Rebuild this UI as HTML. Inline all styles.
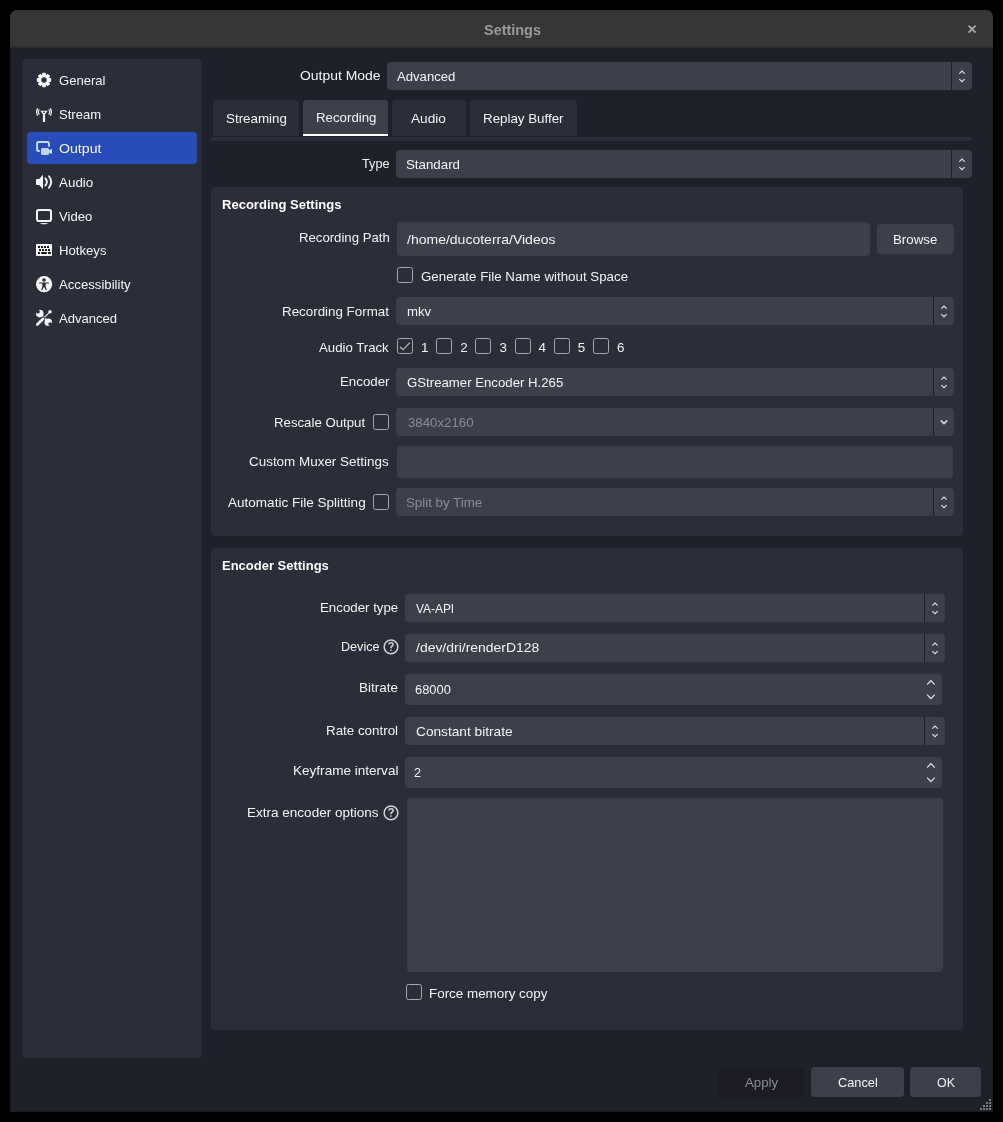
<!DOCTYPE html>
<html><head><meta charset="utf-8"><style>
html,body{margin:0;padding:0;background:#000;width:1003px;height:1122px;overflow:hidden;}
body{position:relative;font-family:"Liberation Sans",sans-serif;}
#root{position:absolute;left:0;top:0;width:1003px;height:1122px;will-change:transform;}
</style></head><body>
<div id="root">
<div style="position:absolute;left:10px;top:10px;width:983px;height:1102px;background:#1b1b1b;border-radius:7px 7px 0 0;"></div>
<div style="position:absolute;left:11px;top:48px;width:981px;height:1063px;background:#1f212a;border-radius:0;"></div>
<div style="position:absolute;left:10px;top:10px;width:983px;height:36px;background:#363636;border-radius:7px 7px 0 0;"></div>
<div style="position:absolute;left:10px;top:46px;width:983px;height:2px;background:#2b2b2b;border-radius:0;"></div>
<div style="position:absolute;left:484.40px;top:22.15px;font-size:14.2px;line-height:16.32px;color:#9b9b9b;font-weight:bold;white-space:nowrap;transform:scaleX(1.0175);transform-origin:0 0;">Settings</div>
<svg style="position:absolute;left:966px;top:23px;" width="12" height="12" viewBox="0 0 12 12"><path d="M2.6 2.6L9.6 9.6M9.6 2.6L2.6 9.6" stroke="#a5a5a5" stroke-width="2" stroke-linecap="butt"/></svg>
<div style="position:absolute;left:22px;top:59px;width:180px;height:999px;background:#2b2d38;border-radius:4px;"></div>
<div style="position:absolute;left:27px;top:132px;width:170px;height:32px;background:#284cb8;border-radius:4px;"></div>
<div style="position:absolute;left:58.50px;top:72.85px;font-size:13.2px;line-height:15.17px;color:#f6f6f6;font-weight:normal;white-space:nowrap;transform:scaleX(0.9902);transform-origin:0 0;">General</div>
<div style="position:absolute;left:58.50px;top:106.85px;font-size:13.2px;line-height:15.17px;color:#f6f6f6;font-weight:normal;white-space:nowrap;transform:scaleX(0.9897);transform-origin:0 0;">Stream</div>
<div style="position:absolute;left:58.50px;top:140.85px;font-size:13.2px;line-height:15.17px;color:#f6f6f6;font-weight:normal;white-space:nowrap;transform:scaleX(1.0723);transform-origin:0 0;">Output</div>
<div style="position:absolute;left:58.50px;top:174.85px;font-size:13.2px;line-height:15.17px;color:#f6f6f6;font-weight:normal;white-space:nowrap;transform:scaleX(1.0160);transform-origin:0 0;">Audio</div>
<div style="position:absolute;left:58.50px;top:208.85px;font-size:13.2px;line-height:15.17px;color:#f6f6f6;font-weight:normal;white-space:nowrap;transform:scaleX(0.9932);transform-origin:0 0;">Video</div>
<div style="position:absolute;left:58.50px;top:242.85px;font-size:13.2px;line-height:15.17px;color:#f6f6f6;font-weight:normal;white-space:nowrap;transform:scaleX(0.9961);transform-origin:0 0;">Hotkeys</div>
<div style="position:absolute;left:58.50px;top:276.85px;font-size:13.2px;line-height:15.17px;color:#f6f6f6;font-weight:normal;white-space:nowrap;transform:scaleX(0.9976);transform-origin:0 0;">Accessibility</div>
<div style="position:absolute;left:58.50px;top:310.85px;font-size:13.2px;line-height:15.17px;color:#f6f6f6;font-weight:normal;white-space:nowrap;transform:scaleX(0.9880);transform-origin:0 0;">Advanced</div>
<svg style="position:absolute;left:36px;top:72px;" width="16" height="16" viewBox="0 0 16 16"><g transform="translate(8,8)"><rect x="-1.9" y="-7.2" width="3.8" height="4" rx="0.8" fill="#f4f4f4" transform="rotate(0)"/><rect x="-1.9" y="-7.2" width="3.8" height="4" rx="0.8" fill="#f4f4f4" transform="rotate(45)"/><rect x="-1.9" y="-7.2" width="3.8" height="4" rx="0.8" fill="#f4f4f4" transform="rotate(90)"/><rect x="-1.9" y="-7.2" width="3.8" height="4" rx="0.8" fill="#f4f4f4" transform="rotate(135)"/><rect x="-1.9" y="-7.2" width="3.8" height="4" rx="0.8" fill="#f4f4f4" transform="rotate(180)"/><rect x="-1.9" y="-7.2" width="3.8" height="4" rx="0.8" fill="#f4f4f4" transform="rotate(225)"/><rect x="-1.9" y="-7.2" width="3.8" height="4" rx="0.8" fill="#f4f4f4" transform="rotate(270)"/><rect x="-1.9" y="-7.2" width="3.8" height="4" rx="0.8" fill="#f4f4f4" transform="rotate(315)"/><circle r="5.3" fill="#f4f4f4"/><circle r="2.7" fill="#2b2d38"/></g></svg>
<svg style="position:absolute;left:36px;top:104px;" width="16" height="20" viewBox="0 0 16 20"><path d="M4.3 6.8 H11.7 L8 11.8 Z" fill="#f4f4f4"/>
<ellipse cx="8" cy="8.2" rx="1" ry="0.7" fill="#2b2d38"/>
<rect x="6.9" y="10.8" width="2.2" height="7.2" fill="#f4f4f4"/>
<path d="M1.9 4.3 Q-0.7 8 1.9 11.7" fill="none" stroke="#f4f4f4" stroke-width="1.3"/>
<path d="M3.5 5.6 Q0.9 8 3.5 10.4" fill="none" stroke="#f4f4f4" stroke-width="1.2"/>
<path d="M14.1 4.3 Q16.7 8 14.1 11.7" fill="none" stroke="#f4f4f4" stroke-width="1.3"/>
<path d="M12.5 5.6 Q15.1 8 12.5 10.4" fill="none" stroke="#f4f4f4" stroke-width="1.2"/></svg>
<svg style="position:absolute;left:34px;top:137px;" width="20" height="20" viewBox="0 0 20 20"><path d="M14.9 9.65 V6.7 Q14.9 5.06 13.3 5.06 H4.7 Q3.08 5.06 3.08 6.7 V12.3 Q3.08 13.9 4.7 13.9 H5.8" fill="none" stroke="#c6dcf2" stroke-width="2"/>
<rect x="7" y="11" width="8.1" height="7" rx="1.6" fill="#bfd5ee"/>
<path d="M14.5 13.6 L18 11.8 V17.1 L14.5 15.4 Z" fill="#c6dcf2"/></svg>
<svg style="position:absolute;left:34px;top:171px;" width="22" height="22" viewBox="0 0 22 22"><path d="M2 9.3 Q2 8.1 3.2 8.1 H5.2 L9 3.7 V18.2 L5.2 14 H3.2 Q2 14 2 12.8Z" fill="#f4f4f4"/>
<path d="M11.3 7.4 Q14.5 11 11.3 14.6" fill="none" stroke="#f4f4f4" stroke-width="1.9" stroke-linecap="round"/>
<path d="M15 5.3 Q19.3 11 15 16.7" fill="none" stroke="#f4f4f4" stroke-width="1.9" stroke-linecap="round"/></svg>
<svg style="position:absolute;left:36px;top:209px;" width="16" height="16" viewBox="0 0 16 16"><rect x="1" y="1" width="14" height="11" rx="1.8" fill="none" stroke="#f4f4f4" stroke-width="2"/>
<ellipse cx="8" cy="14.6" rx="4" ry="0.7" fill="#f4f4f4"/></svg>
<svg style="position:absolute;left:36px;top:244px;" width="16" height="12" viewBox="0 0 16 12"><rect x="0" y="0" width="16" height="12" rx="0.7" fill="#f4f4f4"/><rect x="2" y="2" width="2" height="2" rx="0.3" fill="#15161c"/><rect x="5" y="2" width="2" height="2" rx="0.3" fill="#15161c"/><rect x="8" y="2" width="2" height="2" rx="0.3" fill="#15161c"/><rect x="11" y="2" width="2" height="2" rx="0.3" fill="#15161c"/><rect x="3" y="5" width="2" height="2" rx="0.3" fill="#15161c"/><rect x="6" y="5" width="2" height="2" rx="0.3" fill="#15161c"/><rect x="9" y="5" width="2" height="2" rx="0.3" fill="#15161c"/><rect x="12" y="5" width="2" height="2" rx="0.3" fill="#15161c"/><rect x="2" y="8" width="2" height="2" rx="0.3" fill="#15161c"/><rect x="5.2" y="8" width="5.6" height="2" rx="0.3" fill="#15161c"/><rect x="12.1" y="8" width="2.8" height="2" rx="0.3" fill="#15161c"/></svg>
<svg style="position:absolute;left:36px;top:275.6px;" width="17" height="17" viewBox="0 0 17 17"><circle cx="8.1" cy="8.2" r="8.1" fill="#f4f4f4"/>
<circle cx="8" cy="4" r="1.8" fill="#2b2d38"/>
<path d="M3 6.4 H13 V7.4 L9.7 7.6 L9.6 10.5 L10.9 14.1 L9.9 14.3 L8 10.8 L6.1 14.3 L5.1 14.1 L6.4 10.5 L6.3 7.6 L3 7.4Z" fill="#2b2d38"/></svg>
<svg style="position:absolute;left:34px;top:306px;" width="22" height="24" viewBox="0 0 22 24"><path d="M5.8 7.6 L14.3 16.2" stroke="#f4f4f4" stroke-width="2.3"/>
<circle cx="5.8" cy="7.6" r="3.8" fill="#f4f4f4"/><circle cx="3.9" cy="5.7" r="1.9" fill="#2b2d38"/>
<circle cx="14.3" cy="16.2" r="3.8" fill="#f4f4f4"/><circle cx="16.2" cy="18.1" r="1.9" fill="#2b2d38"/>
<path d="M8.6 13.4 L15.4 6.4" stroke="#2b2d38" stroke-width="2.4"/>
<path d="M8.6 13.4 L15.4 6.4" stroke="#f4f4f4" stroke-width="1.1"/>
<path d="M3.3 18.6 L9 12.9" stroke="#2b2d38" stroke-width="4.4" stroke-linecap="round"/>
<path d="M3.3 18.6 L9 12.9" stroke="#f4f4f4" stroke-width="2.8" stroke-linecap="round"/>
<circle cx="16" cy="5.8" r="1.7" fill="#f4f4f4"/></svg>
<div style="position:absolute;left:300.00px;top:68.27px;font-size:13.4px;line-height:15.40px;color:#f4f4f4;font-weight:normal;white-space:nowrap;transform:scaleX(1.0402);transform-origin:0 0;">Output Mode</div>
<div style="position:absolute;left:387px;top:62px;width:585px;height:28px;background:#3c404b;border-radius:4px;"></div>
<div style="position:absolute;left:951px;top:62px;width:1px;height:28px;background:#1c1e26;border-radius:0;"></div>
<svg style="position:absolute;left:952px;top:62px;" width="20" height="28" viewBox="0 0 20 28"><path d="M7.3 11.700000000000001 L10 9.1 L12.7 11.700000000000001" fill="none" stroke="#e4e4e4" stroke-width="1.1"/><path d="M7.3 17.099999999999998 L10 19.7 L12.7 17.099999999999998" fill="none" stroke="#e4e4e4" stroke-width="1.1"/></svg>
<div style="position:absolute;left:397.00px;top:68.87px;font-size:13.4px;line-height:15.40px;color:#f4f4f4;font-weight:normal;white-space:nowrap;transform:scaleX(0.9799);transform-origin:0 0;">Advanced</div>
<div style="position:absolute;left:211px;top:137px;width:760px;height:4px;background:#2b2d38;border-radius:0;"></div>
<div style="position:absolute;left:213px;top:100px;width:86px;height:36px;background:#2b2d38;border-radius:4px 4px 0 0;"></div>
<div style="position:absolute;left:225.50px;top:111.37px;font-size:13.4px;line-height:15.40px;color:#f4f4f4;font-weight:normal;white-space:nowrap;transform:scaleX(0.9988);transform-origin:0 0;">Streaming</div>
<div style="position:absolute;left:303px;top:100px;width:85px;height:36px;background:#3c404b;border-radius:4px 4px 0 0;"></div>
<div style="position:absolute;left:303px;top:134px;width:85px;height:2px;background:#ffffff;border-radius:0;"></div>
<div style="position:absolute;left:315.50px;top:110.27px;font-size:13.4px;line-height:15.40px;color:#f4f4f4;font-weight:normal;white-space:nowrap;transform:scaleX(0.9907);transform-origin:0 0;">Recording</div>
<div style="position:absolute;left:392px;top:100px;width:74px;height:36px;background:#2b2d38;border-radius:4px 4px 0 0;"></div>
<div style="position:absolute;left:411.30px;top:110.77px;font-size:13.4px;line-height:15.40px;color:#f4f4f4;font-weight:normal;white-space:nowrap;transform:scaleX(1.0184);transform-origin:0 0;">Audio</div>
<div style="position:absolute;left:470px;top:100px;width:107px;height:36px;background:#2b2d38;border-radius:4px 4px 0 0;"></div>
<div style="position:absolute;left:483.30px;top:110.77px;font-size:13.4px;line-height:15.40px;color:#f4f4f4;font-weight:normal;white-space:nowrap;transform:scaleX(0.9958);transform-origin:0 0;">Replay Buffer</div>
<div style="position:absolute;left:362.00px;top:156.47px;font-size:13.4px;line-height:15.40px;color:#f4f4f4;font-weight:normal;white-space:nowrap;transform:scaleX(0.9503);transform-origin:0 0;">Type</div>
<div style="position:absolute;left:396px;top:150px;width:576px;height:28px;background:#3c404b;border-radius:4px;"></div>
<div style="position:absolute;left:951px;top:150px;width:1px;height:28px;background:#1c1e26;border-radius:0;"></div>
<svg style="position:absolute;left:952px;top:150px;" width="20" height="28" viewBox="0 0 20 28"><path d="M7.3 11.700000000000001 L10 9.1 L12.7 11.700000000000001" fill="none" stroke="#e4e4e4" stroke-width="1.1"/><path d="M7.3 17.099999999999998 L10 19.7 L12.7 17.099999999999998" fill="none" stroke="#e4e4e4" stroke-width="1.1"/></svg>
<div style="position:absolute;left:406.40px;top:156.87px;font-size:13.4px;line-height:15.40px;color:#f4f4f4;font-weight:normal;white-space:nowrap;transform:scaleX(0.9932);transform-origin:0 0;">Standard</div>
<div style="position:absolute;left:211px;top:187px;width:752px;height:349px;background:#2b2d38;border-radius:4px;"></div>
<div style="position:absolute;left:221.50px;top:197.14px;font-size:13.1px;line-height:15.05px;color:#ffffff;font-weight:bold;white-space:nowrap;transform:scaleX(0.9951);transform-origin:0 0;">Recording Settings</div>
<div style="position:absolute;left:298.50px;top:230.07px;font-size:13.4px;line-height:15.40px;color:#f4f4f4;font-weight:normal;white-space:nowrap;transform:scaleX(0.9831);transform-origin:0 0;">Recording Path</div>
<div style="position:absolute;left:397px;top:222px;width:473px;height:34px;background:#3c404b;border-radius:4px;"></div>
<div style="position:absolute;left:407.40px;top:231.87px;font-size:13.4px;line-height:15.40px;color:#f4f4f4;font-weight:normal;white-space:nowrap;transform:scaleX(1.0462);transform-origin:0 0;">/home/ducoterra/Videos</div>
<div style="position:absolute;left:877px;top:224px;width:77px;height:30px;background:#3c404b;border-radius:4px;"></div>
<div style="position:absolute;left:893.00px;top:232.17px;font-size:13.4px;line-height:15.40px;color:#f4f4f4;font-weight:normal;white-space:nowrap;transform:scaleX(0.9913);transform-origin:0 0;">Browse</div>
<div style="position:absolute;left:397px;top:267px;width:16px;height:16px;background:transparent;border-radius:2.5px;box-sizing:border-box;border:1.3px solid #a6a7ab;"></div>
<div style="position:absolute;left:420.80px;top:268.87px;font-size:13.4px;line-height:15.40px;color:#f4f4f4;font-weight:normal;white-space:nowrap;transform:scaleX(0.9934);transform-origin:0 0;">Generate File Name without Space</div>
<div style="position:absolute;left:282.40px;top:303.57px;font-size:13.4px;line-height:15.40px;color:#f4f4f4;font-weight:normal;white-space:nowrap;transform:scaleX(0.9978);transform-origin:0 0;">Recording Format</div>
<div style="position:absolute;left:396px;top:297px;width:558px;height:28px;background:#3c404b;border-radius:4px;"></div>
<div style="position:absolute;left:933px;top:297px;width:1px;height:28px;background:#1c1e26;border-radius:0;"></div>
<svg style="position:absolute;left:934px;top:297px;" width="20" height="28" viewBox="0 0 20 28"><path d="M7.3 11.700000000000001 L10 9.1 L12.7 11.700000000000001" fill="none" stroke="#e4e4e4" stroke-width="1.1"/><path d="M7.3 17.099999999999998 L10 19.7 L12.7 17.099999999999998" fill="none" stroke="#e4e4e4" stroke-width="1.1"/></svg>
<div style="position:absolute;left:406.70px;top:303.87px;font-size:13.4px;line-height:15.40px;color:#f4f4f4;font-weight:normal;white-space:nowrap;transform:scaleX(0.9855);transform-origin:0 0;">mkv</div>
<div style="position:absolute;left:319.20px;top:340.37px;font-size:13.4px;line-height:15.40px;color:#f4f4f4;font-weight:normal;white-space:nowrap;transform:scaleX(0.9861);transform-origin:0 0;">Audio Track</div>
<div style="position:absolute;left:397px;top:338px;width:16px;height:16px;background:transparent;border-radius:2.5px;box-sizing:border-box;border:1.3px solid #a6a7ab;"></div>
<svg style="position:absolute;left:397.0px;top:338.2px;" width="16" height="16" viewBox="0 0 16 16"><path d="M3 9 L6 11.6 L13 4.6" fill="none" stroke="#b4b4b6" stroke-width="1.3"/></svg>
<div style="position:absolute;left:421.0px;top:340.37px;font-size:13.4px;line-height:15.40px;color:#f4f4f4;font-weight:normal;white-space:nowrap;">1</div>
<div style="position:absolute;left:436px;top:338px;width:16px;height:16px;background:transparent;border-radius:2.5px;box-sizing:border-box;border:1.3px solid #a6a7ab;"></div>
<div style="position:absolute;left:460.2px;top:340.37px;font-size:13.4px;line-height:15.40px;color:#f4f4f4;font-weight:normal;white-space:nowrap;">2</div>
<div style="position:absolute;left:475px;top:338px;width:16px;height:16px;background:transparent;border-radius:2.5px;box-sizing:border-box;border:1.3px solid #a6a7ab;"></div>
<div style="position:absolute;left:499.4px;top:340.37px;font-size:13.4px;line-height:15.40px;color:#f4f4f4;font-weight:normal;white-space:nowrap;">3</div>
<div style="position:absolute;left:515px;top:338px;width:16px;height:16px;background:transparent;border-radius:2.5px;box-sizing:border-box;border:1.3px solid #a6a7ab;"></div>
<div style="position:absolute;left:538.6px;top:340.37px;font-size:13.4px;line-height:15.40px;color:#f4f4f4;font-weight:normal;white-space:nowrap;">4</div>
<div style="position:absolute;left:554px;top:338px;width:16px;height:16px;background:transparent;border-radius:2.5px;box-sizing:border-box;border:1.3px solid #a6a7ab;"></div>
<div style="position:absolute;left:577.8px;top:340.37px;font-size:13.4px;line-height:15.40px;color:#f4f4f4;font-weight:normal;white-space:nowrap;">5</div>
<div style="position:absolute;left:593px;top:338px;width:16px;height:16px;background:transparent;border-radius:2.5px;box-sizing:border-box;border:1.3px solid #a6a7ab;"></div>
<div style="position:absolute;left:617.0px;top:340.37px;font-size:13.4px;line-height:15.40px;color:#f4f4f4;font-weight:normal;white-space:nowrap;">6</div>
<div style="position:absolute;left:339.50px;top:373.87px;font-size:13.4px;line-height:15.40px;color:#f4f4f4;font-weight:normal;white-space:nowrap;transform:scaleX(0.9917);transform-origin:0 0;">Encoder</div>
<div style="position:absolute;left:396px;top:368px;width:558px;height:28px;background:#3c404b;border-radius:4px;"></div>
<div style="position:absolute;left:933px;top:368px;width:1px;height:28px;background:#1c1e26;border-radius:0;"></div>
<svg style="position:absolute;left:934px;top:368px;" width="20" height="28" viewBox="0 0 20 28"><path d="M7.3 11.700000000000001 L10 9.1 L12.7 11.700000000000001" fill="none" stroke="#e4e4e4" stroke-width="1.1"/><path d="M7.3 17.099999999999998 L10 19.7 L12.7 17.099999999999998" fill="none" stroke="#e4e4e4" stroke-width="1.1"/></svg>
<div style="position:absolute;left:406.80px;top:374.87px;font-size:13.4px;line-height:15.40px;color:#f4f4f4;font-weight:normal;white-space:nowrap;transform:scaleX(0.9858);transform-origin:0 0;">GStreamer Encoder H.265</div>
<div style="position:absolute;left:274.40px;top:414.57px;font-size:13.4px;line-height:15.40px;color:#f4f4f4;font-weight:normal;white-space:nowrap;transform:scaleX(0.9874);transform-origin:0 0;">Rescale Output</div>
<div style="position:absolute;left:373px;top:414px;width:16px;height:16px;background:transparent;border-radius:2.5px;box-sizing:border-box;border:1.3px solid #a6a7ab;"></div>
<div style="position:absolute;left:396px;top:408px;width:558px;height:28px;background:#3c404b;border-radius:4px;"></div>
<div style="position:absolute;left:933px;top:408px;width:1px;height:28px;background:#1c1e26;border-radius:0;"></div>
<svg style="position:absolute;left:934px;top:408px;" width="20" height="28" viewBox="0 0 20 28"><path d="M6.8 12.4 L10 15.6 L13.2 12.4" fill="none" stroke="#dcdcdc" stroke-width="1.5"/></svg>
<div style="position:absolute;left:408.30px;top:414.87px;font-size:13.4px;line-height:15.40px;color:#8a8c92;font-weight:normal;white-space:nowrap;transform:scaleX(0.9890);transform-origin:0 0;">3840x2160</div>
<div style="position:absolute;left:249.30px;top:453.87px;font-size:13.4px;line-height:15.40px;color:#f4f4f4;font-weight:normal;white-space:nowrap;transform:scaleX(1.0032);transform-origin:0 0;">Custom Muxer Settings</div>
<div style="position:absolute;left:397px;top:446px;width:556px;height:32px;background:#3c404b;border-radius:4px;"></div>
<div style="position:absolute;left:227.80px;top:494.87px;font-size:13.4px;line-height:15.40px;color:#f4f4f4;font-weight:normal;white-space:nowrap;transform:scaleX(1.0109);transform-origin:0 0;">Automatic File Splitting</div>
<div style="position:absolute;left:373px;top:494px;width:16px;height:16px;background:transparent;border-radius:2.5px;box-sizing:border-box;border:1.3px solid #a6a7ab;"></div>
<div style="position:absolute;left:396px;top:488px;width:558px;height:28px;background:#3c404b;border-radius:4px;"></div>
<div style="position:absolute;left:933px;top:488px;width:1px;height:28px;background:#1c1e26;border-radius:0;"></div>
<svg style="position:absolute;left:934px;top:488px;" width="20" height="28" viewBox="0 0 20 28"><path d="M7.3 11.700000000000001 L10 9.1 L12.7 11.700000000000001" fill="none" stroke="#e4e4e4" stroke-width="1.1"/><path d="M7.3 17.099999999999998 L10 19.7 L12.7 17.099999999999998" fill="none" stroke="#e4e4e4" stroke-width="1.1"/></svg>
<div style="position:absolute;left:406.30px;top:494.87px;font-size:13.4px;line-height:15.40px;color:#8a8c92;font-weight:normal;white-space:nowrap;transform:scaleX(0.9933);transform-origin:0 0;">Split by Time</div>
<div style="position:absolute;left:211px;top:548px;width:752px;height:482px;background:#2b2d38;border-radius:4px;"></div>
<div style="position:absolute;left:221.50px;top:558.14px;font-size:13.1px;line-height:15.05px;color:#ffffff;font-weight:bold;white-space:nowrap;transform:scaleX(0.9921);transform-origin:0 0;">Encoder Settings</div>
<div style="position:absolute;left:320.00px;top:599.87px;font-size:13.4px;line-height:15.40px;color:#f4f4f4;font-weight:normal;white-space:nowrap;transform:scaleX(0.9916);transform-origin:0 0;">Encoder type</div>
<div style="position:absolute;left:405px;top:594px;width:540px;height:28px;background:#3c404b;border-radius:4px;"></div>
<div style="position:absolute;left:924px;top:594px;width:1px;height:28px;background:#1c1e26;border-radius:0;"></div>
<svg style="position:absolute;left:925px;top:594px;" width="20" height="28" viewBox="0 0 20 28"><path d="M7.3 11.700000000000001 L10 9.1 L12.7 11.700000000000001" fill="none" stroke="#e4e4e4" stroke-width="1.1"/><path d="M7.3 17.099999999999998 L10 19.7 L12.7 17.099999999999998" fill="none" stroke="#e4e4e4" stroke-width="1.1"/></svg>
<div style="position:absolute;left:415.60px;top:600.87px;font-size:13.4px;line-height:15.40px;color:#f4f4f4;font-weight:normal;white-space:nowrap;transform:scaleX(0.8895);transform-origin:0 0;">VA-API</div>
<div style="position:absolute;left:340.50px;top:639.07px;font-size:13.4px;line-height:15.40px;color:#f4f4f4;font-weight:normal;white-space:nowrap;transform:scaleX(0.9397);transform-origin:0 0;">Device</div>
<svg style="position:absolute;left:383px;top:638.7px;" width="16" height="16" viewBox="0 0 16 16"><circle cx="8" cy="7.9" r="6.85" fill="none" stroke="#d4d4d4" stroke-width="1.5"/><path d="M5.9 5.6 Q5.9 3.8 8 3.8 Q10.1 3.8 10.1 5.5 Q10.1 6.7 8.9 7.2 Q8 7.6 8 8.7 V9.3" fill="none" stroke="#d4d4d4" stroke-width="1.5"/><rect x="7.2" y="10.5" width="1.6" height="1.3" fill="#d4d4d4"/></svg>
<div style="position:absolute;left:405px;top:634px;width:540px;height:28px;background:#3c404b;border-radius:4px;"></div>
<div style="position:absolute;left:924px;top:634px;width:1px;height:28px;background:#1c1e26;border-radius:0;"></div>
<svg style="position:absolute;left:925px;top:634px;" width="20" height="28" viewBox="0 0 20 28"><path d="M7.3 11.700000000000001 L10 9.1 L12.7 11.700000000000001" fill="none" stroke="#e4e4e4" stroke-width="1.1"/><path d="M7.3 17.099999999999998 L10 19.7 L12.7 17.099999999999998" fill="none" stroke="#e4e4e4" stroke-width="1.1"/></svg>
<div style="position:absolute;left:415.60px;top:639.87px;font-size:13.4px;line-height:15.40px;color:#f4f4f4;font-weight:normal;white-space:nowrap;transform:scaleX(1.0420);transform-origin:0 0;">/dev/dri/renderD128</div>
<div style="position:absolute;left:359.40px;top:680.27px;font-size:13.4px;line-height:15.40px;color:#f4f4f4;font-weight:normal;white-space:nowrap;transform:scaleX(1.0045);transform-origin:0 0;">Bitrate</div>
<div style="position:absolute;left:405px;top:674px;width:537px;height:31px;background:#3c404b;border-radius:4px;"></div>
<svg style="position:absolute;left:922px;top:674px;" width="20" height="31" viewBox="0 0 20 31"><path d="M5.1000000000000005 10.649999999999999 L8.9 6.55 L12.7 10.649999999999999" fill="none" stroke="#e8e8e8" stroke-width="1.2"/><path d="M5.1000000000000005 20.55 L8.9 24.650000000000002 L12.7 20.55" fill="none" stroke="#e8e8e8" stroke-width="1.2"/></svg>
<div style="position:absolute;left:414.60px;top:681.87px;font-size:13.4px;line-height:15.40px;color:#f4f4f4;font-weight:normal;white-space:nowrap;transform:scaleX(0.9610);transform-origin:0 0;">68000</div>
<div style="position:absolute;left:326.40px;top:722.87px;font-size:13.4px;line-height:15.40px;color:#f4f4f4;font-weight:normal;white-space:nowrap;transform:scaleX(0.9978);transform-origin:0 0;">Rate control</div>
<div style="position:absolute;left:405px;top:717px;width:540px;height:28px;background:#3c404b;border-radius:4px;"></div>
<div style="position:absolute;left:924px;top:717px;width:1px;height:28px;background:#1c1e26;border-radius:0;"></div>
<svg style="position:absolute;left:925px;top:717px;" width="20" height="28" viewBox="0 0 20 28"><path d="M7.3 11.700000000000001 L10 9.1 L12.7 11.700000000000001" fill="none" stroke="#e4e4e4" stroke-width="1.1"/><path d="M7.3 17.099999999999998 L10 19.7 L12.7 17.099999999999998" fill="none" stroke="#e4e4e4" stroke-width="1.1"/></svg>
<div style="position:absolute;left:415.60px;top:723.87px;font-size:13.4px;line-height:15.40px;color:#f4f4f4;font-weight:normal;white-space:nowrap;transform:scaleX(1.0222);transform-origin:0 0;">Constant bitrate</div>
<div style="position:absolute;left:293.00px;top:762.87px;font-size:13.4px;line-height:15.40px;color:#f4f4f4;font-weight:normal;white-space:nowrap;transform:scaleX(1.0120);transform-origin:0 0;">Keyframe interval</div>
<div style="position:absolute;left:405px;top:757px;width:537px;height:31px;background:#3c404b;border-radius:4px;"></div>
<svg style="position:absolute;left:922px;top:757px;" width="20" height="31" viewBox="0 0 20 31"><path d="M5.1000000000000005 10.649999999999999 L8.9 6.55 L12.7 10.649999999999999" fill="none" stroke="#e8e8e8" stroke-width="1.2"/><path d="M5.1000000000000005 20.55 L8.9 24.650000000000002 L12.7 20.55" fill="none" stroke="#e8e8e8" stroke-width="1.2"/></svg>
<div style="position:absolute;left:414.20px;top:764.87px;font-size:13.4px;line-height:15.40px;color:#f4f4f4;font-weight:normal;white-space:nowrap;transform:scaleX(0.9412);transform-origin:0 0;">2</div>
<div style="position:absolute;left:247.40px;top:804.87px;font-size:13.4px;line-height:15.40px;color:#f4f4f4;font-weight:normal;white-space:nowrap;transform:scaleX(1.0096);transform-origin:0 0;">Extra encoder options</div>
<svg style="position:absolute;left:383px;top:805.4px;" width="16" height="16" viewBox="0 0 16 16"><circle cx="8" cy="7.9" r="6.85" fill="none" stroke="#d4d4d4" stroke-width="1.5"/><path d="M5.9 5.6 Q5.9 3.8 8 3.8 Q10.1 3.8 10.1 5.5 Q10.1 6.7 8.9 7.2 Q8 7.6 8 8.7 V9.3" fill="none" stroke="#d4d4d4" stroke-width="1.5"/><rect x="7.2" y="10.5" width="1.6" height="1.3" fill="#d4d4d4"/></svg>
<div style="position:absolute;left:407px;top:798px;width:536px;height:174px;background:#3c404b;border-radius:4px;"></div>
<div style="position:absolute;left:406px;top:984px;width:16px;height:16px;background:transparent;border-radius:2.5px;box-sizing:border-box;border:1.3px solid #a6a7ab;"></div>
<div style="position:absolute;left:429.30px;top:985.67px;font-size:13.4px;line-height:15.40px;color:#f4f4f4;font-weight:normal;white-space:nowrap;transform:scaleX(1.0009);transform-origin:0 0;">Force memory copy</div>
<div style="position:absolute;left:719px;top:1067px;width:85px;height:30px;background:#1a1b23;border-radius:4px;"></div>
<div style="position:absolute;left:745.30px;top:1075.47px;font-size:13.4px;line-height:15.40px;color:#8a8c92;font-weight:normal;white-space:nowrap;transform:scaleX(0.9901);transform-origin:0 0;">Apply</div>
<div style="position:absolute;left:811px;top:1067px;width:93px;height:30px;background:#3c404b;border-radius:4px;"></div>
<div style="position:absolute;left:837.50px;top:1075.47px;font-size:13.4px;line-height:15.40px;color:#f4f4f4;font-weight:normal;white-space:nowrap;transform:scaleX(0.9543);transform-origin:0 0;">Cancel</div>
<div style="position:absolute;left:910px;top:1067px;width:71px;height:30px;background:#3c404b;border-radius:4px;"></div>
<div style="position:absolute;left:936.50px;top:1075.47px;font-size:13.4px;line-height:15.40px;color:#f4f4f4;font-weight:normal;white-space:nowrap;transform:scaleX(0.9244);transform-origin:0 0;">OK</div>
<svg style="position:absolute;left:980px;top:1099px;" width="12" height="12" viewBox="0 0 12 12"><rect x="9" y="0" width="2" height="2" fill="#7c7c7e"/><rect x="6" y="3" width="2" height="2" fill="#7c7c7e"/><rect x="9" y="3" width="2" height="2" fill="#7c7c7e"/><rect x="3" y="6" width="2" height="2" fill="#7c7c7e"/><rect x="6" y="6" width="2" height="2" fill="#7c7c7e"/><rect x="9" y="6" width="2" height="2" fill="#7c7c7e"/><rect x="0" y="9" width="2" height="2" fill="#7c7c7e"/><rect x="3" y="9" width="2" height="2" fill="#7c7c7e"/><rect x="6" y="9" width="2" height="2" fill="#7c7c7e"/><rect x="9" y="9" width="2" height="2" fill="#7c7c7e"/></svg>
</div>
</body></html>
